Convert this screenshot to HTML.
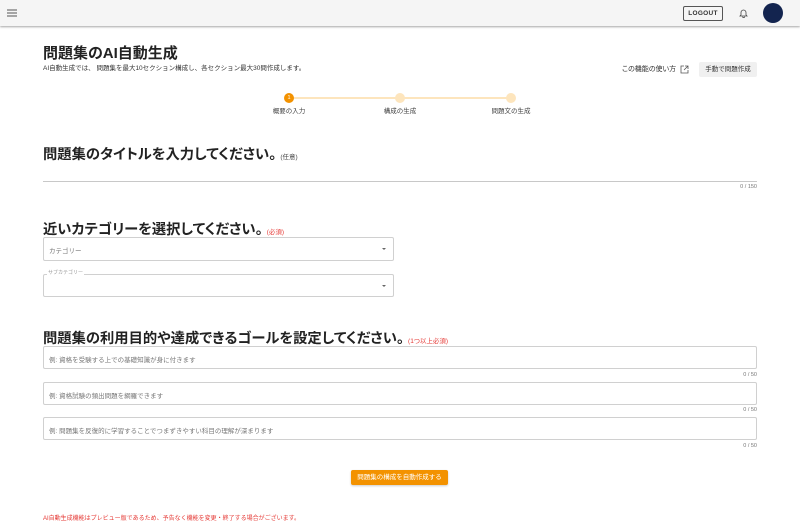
<!DOCTYPE html>
<html><head><meta charset="utf-8"><style>
*{box-sizing:border-box;margin:0;padding:0}
body{width:800px;height:525px;overflow:hidden;background:#fff;font-family:"Liberation Sans","Noto Sans CJK JP",sans-serif;color:#222;position:relative}
.a{position:absolute;white-space:nowrap}
.hdr{position:absolute;left:0;top:0;width:800px;height:26px;background:#f5f5f5;box-shadow:0 1px 2px rgba(0,0,0,.35)}
h2{position:absolute;left:43px;font-size:14.3px;font-weight:bold;white-space:nowrap;color:#222;font-feature-settings:"palt"}
h2 small{font-size:6.5px;font-weight:normal;color:#444;margin-left:4px}
h2 small.r{color:#e53935}
.box{position:absolute;border:1px solid #d0d0d0;border-radius:2px;background:#fff}
.ph{position:absolute;left:5px;top:7px;font-size:6.5px;color:#777}
.cnt{position:absolute;font-size:5.5px;color:#777;right:43px}
.arr{position:absolute;right:7px;top:10px;width:0;height:0;border-left:2.5px solid transparent;border-right:2.5px solid transparent;border-top:2.5px solid #666}
.dot{position:absolute;width:10px;height:10px;border-radius:50%;top:93px}
.lbl{position:absolute;top:105px;font-size:6.5px;color:#444;white-space:nowrap;transform:translateX(-50%)}
</style></head><body>
<div class="hdr">
  <svg class="a" style="left:7px;top:9px" width="10" height="8"><path d="M0 1h10M0 4h10M0 7h10" stroke="#555" stroke-width="1"/></svg>
  <div class="a" style="left:683px;top:6px;width:40px;height:15px;border:1px solid #555;border-radius:2px;font-size:6.5px;font-weight:bold;color:#333;text-align:center;line-height:13px;letter-spacing:.3px">LOGOUT</div>
  <svg class="a" style="left:739px;top:8px" width="9" height="10" viewBox="0 0 9 10"><path d="M2 7V4.5a2.5 2.5 0 015 0V7l1 1H1zM3.6 8.6a1 1 0 002 0" fill="none" stroke="#444" stroke-width=".8"/></svg>
  <div class="a" style="left:763px;top:3px;width:20px;height:20px;border-radius:50%;background:#13244f"></div>
</div>
<div class="a" style="left:43px;top:42px;font-size:15px;font-weight:bold;font-feature-settings:'palt'">問題集のAI自動生成</div>
<div class="a" style="left:43px;top:62px;font-size:6.5px;color:#333">AI自動生成では、 問題集を最大10セクション構成し、各セクション最大30問作成します。</div>
<div class="a" style="left:622px;top:64px;font-size:7px;color:#333;font-feature-settings:'palt'">この機能の使い方</div>
<svg class="a" style="left:680px;top:65px" width="9" height="9" viewBox="0 0 9 9"><path d="M4 1H1v7h7V5M5 1h3v3M8 1L4 5" fill="none" stroke="#555" stroke-width=".8"/></svg>
<div class="a" style="left:699px;top:62px;width:58px;height:15px;background:#f0f0f0;border-radius:2px;font-size:6.5px;color:#333;text-align:center;line-height:15px">手動で問題作成</div>
<div class="a" style="left:289px;top:97px;width:222px;height:2px;background:#fde5bd"></div>
<div class="dot" style="left:284px;background:#f39200;color:#fff;font-size:5.5px;text-align:center;line-height:10px">1</div>
<div class="dot" style="left:395px;background:#fde5bd"></div>
<div class="dot" style="left:506px;background:#fde5bd"></div>
<div class="lbl" style="left:289px">概要の入力</div>
<div class="lbl" style="left:400px">構成の生成</div>
<div class="lbl" style="left:511px">問題文の生成</div>

<h2 style="top:143px">問題集のタイトルを入力してください。<small>(任意)</small></h2>
<div class="a" style="left:43px;top:181px;width:714px;height:1px;background:#c8c8c8"></div>
<div class="cnt" style="top:184px">0 / 150</div>

<h2 style="top:218px">近いカテゴリーを選択してください。<small class="r">(必須)</small></h2>
<div class="box" style="left:43px;top:237px;width:351px;height:24px"><div class="ph">カテゴリー</div><div class="arr"></div></div>
<div class="box" style="left:43px;top:274px;width:351px;height:23px"><div class="arr"></div></div>
<div class="a" style="left:47px;top:269px;font-size:5px;color:#999;background:#fff;padding:0 1px">サブカテゴリー</div>

<h2 style="top:327px">問題集の利用目的や達成できるゴールを設定してください。<small class="r">(1つ以上必須)</small></h2>
<div class="box" style="left:43px;top:346px;width:714px;height:23px"><div class="ph">例: 資格を受験する上での基礎知識が身に付きます</div></div>
<div class="cnt" style="top:372px">0 / 50</div>
<div class="box" style="left:43px;top:382px;width:714px;height:23px"><div class="ph">例: 資格試験の頻出問題を網羅できます</div></div>
<div class="cnt" style="top:407px">0 / 50</div>
<div class="box" style="left:43px;top:417px;width:714px;height:23px"><div class="ph">例: 問題集を反復的に学習することでつまずきやすい科目の理解が深まります</div></div>
<div class="cnt" style="top:443px">0 / 50</div>

<div class="a" style="left:351px;top:470px;width:97px;height:15px;background:#f39200;border-radius:2px;box-shadow:0 1px 2px rgba(0,0,0,.2);color:#fff;font-size:6.5px;text-align:center;line-height:15px">問題集の構成を自動作成する</div>
<div class="a" style="left:43px;top:513px;font-size:6px;color:#e53935">AI自動生成機能はプレビュー版であるため、予告なく機能を変更・終了する場合がございます。</div>
</body></html>
